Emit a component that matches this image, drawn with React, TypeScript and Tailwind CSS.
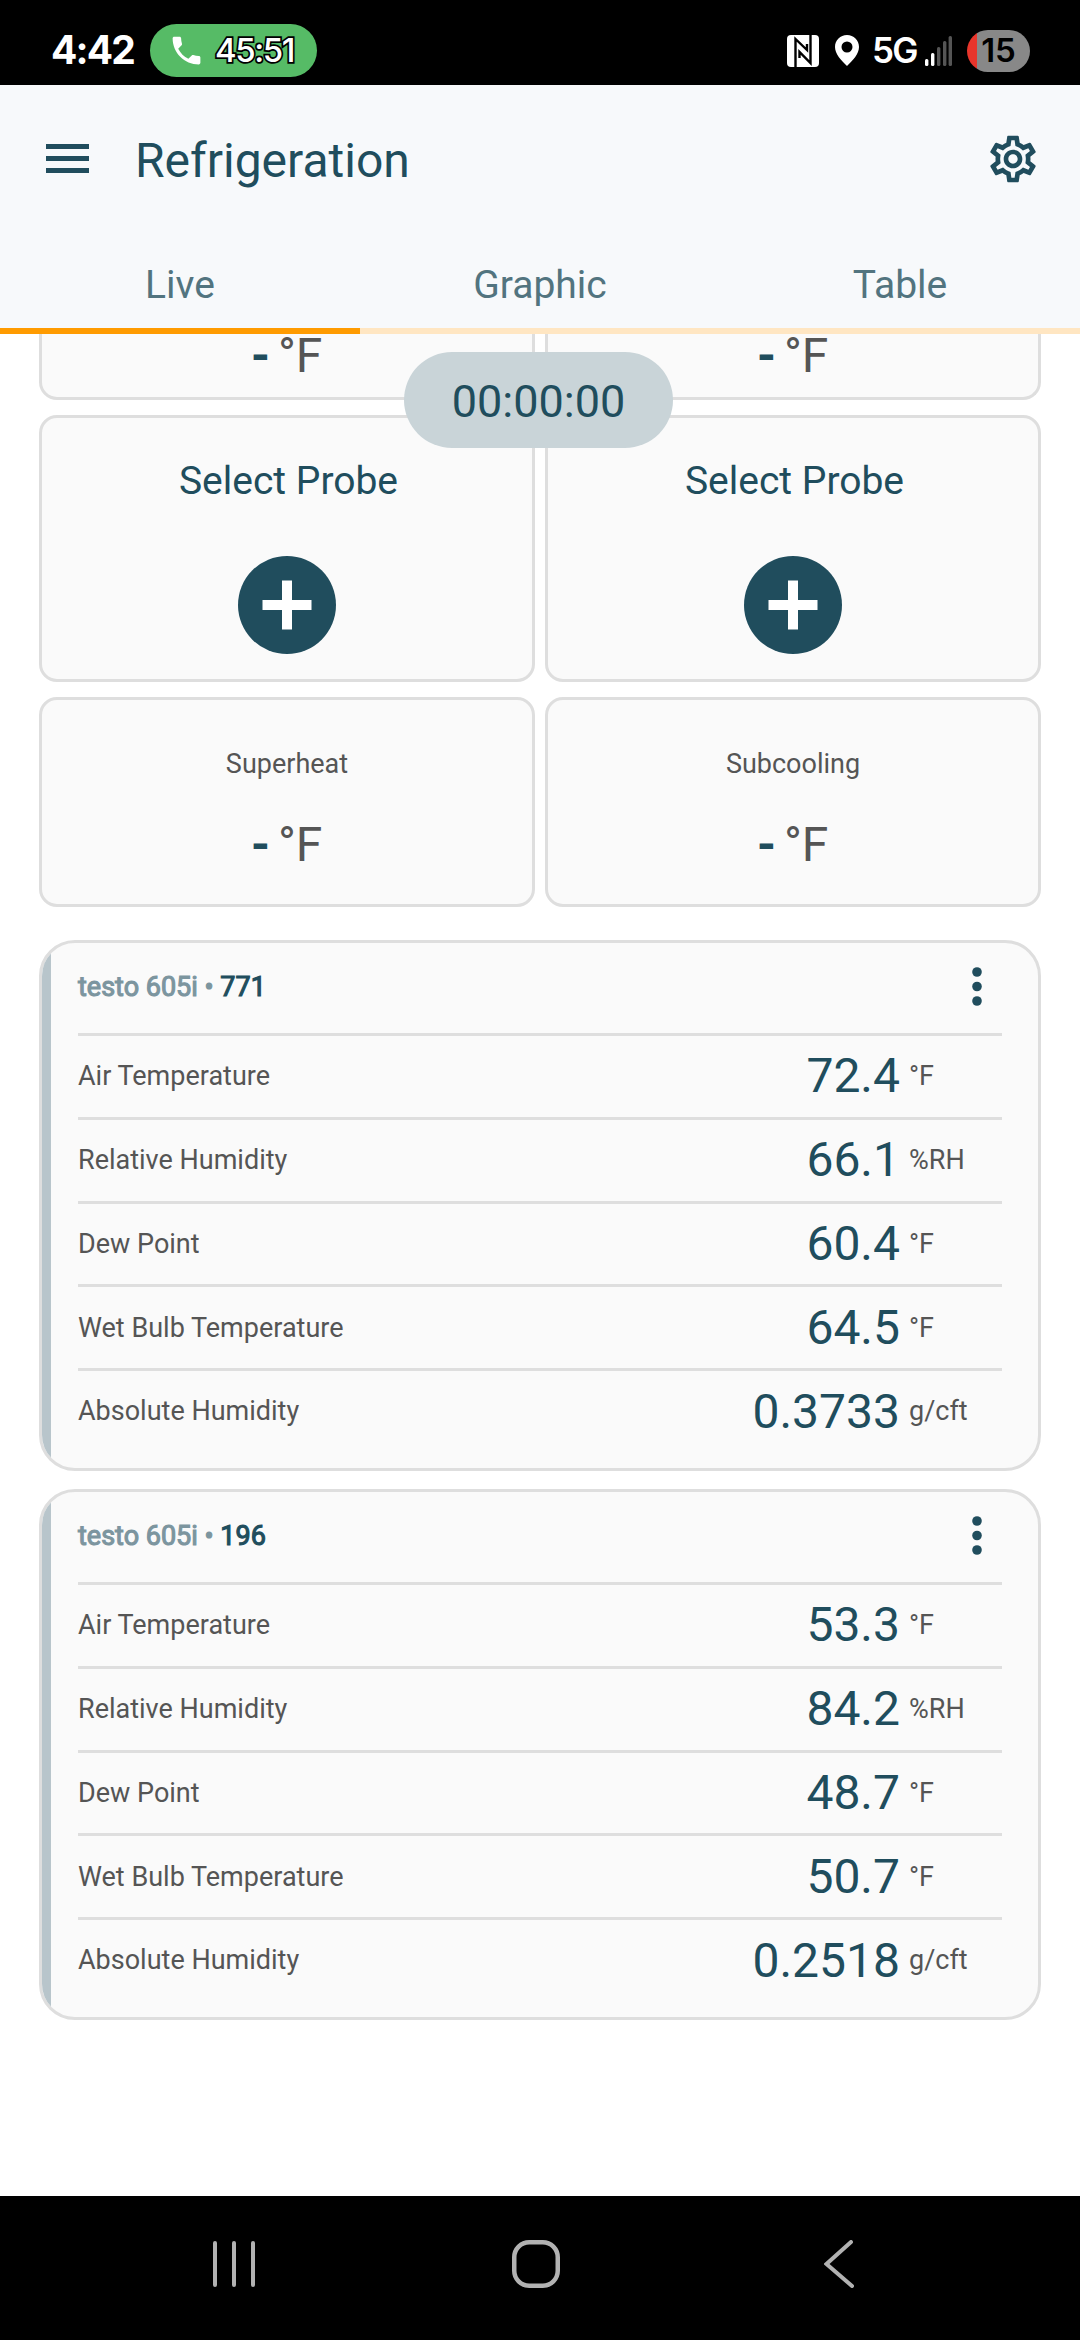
import { MdOutlineSettings, MdPhone } from "react-icons/md"

interface Reading {
  label: string
  value: string
  unit: string
}

interface Probe {
  model: string
  serial: string
  readings: Reading[]
}

const tabs = ["Live", "Graphic", "Table"]

const probes: Probe[] = [
  {
    model: "testo 605i",
    serial: "771",
    readings: [
      { label: "Air Temperature", value: "72.4", unit: "°F" },
      { label: "Relative Humidity", value: "66.1", unit: "%RH" },
      { label: "Dew Point", value: "60.4", unit: "°F" },
      { label: "Wet Bulb Temperature", value: "64.5", unit: "°F" },
      { label: "Absolute Humidity", value: "0.3733", unit: "g/cft" },
    ],
  },
  {
    model: "testo 605i",
    serial: "196",
    readings: [
      { label: "Air Temperature", value: "53.3", unit: "°F" },
      { label: "Relative Humidity", value: "84.2", unit: "%RH" },
      { label: "Dew Point", value: "48.7", unit: "°F" },
      { label: "Wet Bulb Temperature", value: "50.7", unit: "°F" },
      { label: "Absolute Humidity", value: "0.2518", unit: "g/cft" },
    ],
  },
]

export default function App() {
  return (
    <div className="flex h-[2340px] w-[1080px] flex-col overflow-hidden bg-white font-['Roboto','Liberation_Sans',sans-serif] text-[#204d5d]">
      <StatusBar />
      <Header />
      <main className="relative min-h-0 flex-1 overflow-hidden px-[39px]">
        {/* previous row is scrolled mostly out of view */}
        <div className="grid grid-cols-2 gap-x-[10px]">
          {[0, 1].map((i) => (
            <div key={i} className="flex h-[66px] items-start justify-center rounded-b-[18px] border-3 border-t-0 border-[#dedede] bg-[#fafafa] pt-[2px]">
              <EmptyValue />
            </div>
          ))}
        </div>
        <div className="mt-[15px] grid grid-cols-2 gap-x-[10px]">
          <SelectProbe />
          <SelectProbe />
        </div>
        <div className="mt-[15px] grid grid-cols-2 gap-x-[10px]">
          <ResultCard label="Superheat" />
          <ResultCard label="Subcooling" />
        </div>
        <div className="mt-[33px] flex flex-col gap-[18.5px]">
          {probes.map((probe) => (
            <ProbeCard key={probe.serial} probe={probe} />
          ))}
        </div>
        {/* floating timer */}
        <div className="absolute top-[18px] left-[404px] flex h-[96px] w-[269px] items-center justify-center rounded-full bg-[#c9d4d8] pt-[3px] text-[45px]">
          00:00:00
        </div>
      </main>
      <NavBar />
    </div>
  )
}

function StatusBar() {
  return (
    <div className="flex h-[85px] shrink-0 items-center bg-black pt-[16px] pr-[50px] pl-[51px] text-white">
      <span className="w-[99px] font-['Inter'] text-[39px] font-bold tracking-[-1.8px]">4:42</span>
      <div className="flex h-[53px] w-[167px] items-center rounded-full bg-[#56bb66] pl-[18px]">
        <MdPhone className="size-[37px]" />
        <span className="ml-[10px] font-['Inter'] text-[33px] font-medium tracking-[-1.4px] [-webkit-text-stroke:3.5px_black] [paint-order:stroke_fill]">45:51</span>
      </div>
      <div className="ml-auto flex items-center">
        <svg className="size-[32px]" viewBox="0 0 32 32">
          <rect width="32" height="32" rx="4" fill="white" />
          <path d="M8.5 32V4L20 15V9M23.5 0v28L12.5 17v6" stroke="black" strokeWidth="2.4" fill="none" />
        </svg>
        <svg className="ml-[16px] h-[31px] w-[24px]" viewBox="0 0 24 31">
          <path
            fill="white"
            fillRule="evenodd"
            d="M12 0C5.300 0 0 5.300 0 12c0 7 6 13 12 19 6-6 12-12 12-19C24 5.300 18.700 0 12 0zm0 6.500a5.500 5.500 0 1 1 0 11 5.500 5.500 0 0 1 0-11z"
          />
        </svg>
        <span className="ml-[13px] w-[53px] font-['Inter'] text-[35px] font-semibold tracking-[-1.8px]">5G</span>
        <svg className="h-[30px] w-[27px]" viewBox="0 0 27 30">
          <rect x="0" y="23" width="3.4" height="7" rx="1.5" fill="white" />
          <rect x="6" y="17" width="3.4" height="13" rx="1.5" fill="white" />
          <rect x="12" y="11" width="3.4" height="19" rx="1.5" fill="#555" />
          <rect x="18" y="5" width="3.4" height="25" rx="1.5" fill="#555" />
          <rect x="23.6" y="0" width="3.4" height="30" rx="1.5" fill="#555" />
        </svg>
        <div className="ml-[15px] flex h-[42px] w-[63px] items-center justify-center rounded-full bg-[linear-gradient(to_right,#e8352b_10px,#888_10px)] font-['Inter'] text-[33px] font-semibold text-black">
          15
        </div>
      </div>
    </div>
  )
}

function Header() {
  return (
    <header className="h-[249px] shrink-0 bg-[#f7f9fb]">
      <div className="flex h-[147px] items-center pr-[39px] pl-[46px]">
        <div className="flex w-[43px] flex-col gap-[7px]">
          <span className="h-[5px] bg-[#204d5d]" />
          <span className="h-[5px] bg-[#204d5d]" />
          <span className="h-[5px] bg-[#204d5d]" />
        </div>
        <h1 className="ml-[46px] pt-[4px] text-[48px]">Refrigeration</h1>
        <MdOutlineSettings className="ml-auto size-[56px]" />
      </div>
      <nav className="grid h-[102px] grid-cols-3">
        {tabs.map((tab, i) => (
          <div
            key={tab}
            className={`flex items-center justify-center border-b-6 pt-[10px] text-[39px] text-[#52747f] ${
              i === 0 ? "border-[#ff9b00]" : "border-[#ffe6c2]"
            }`}
          >
            {tab}
          </div>
        ))}
      </nav>
    </header>
  )
}

function EmptyValue() {
  return (
    <div className="flex items-center gap-[11px] pl-[2px] text-[48px] leading-[40px]">
      <span className="[-webkit-text-stroke:2px_#204d5d]">-</span>
      <span className="text-[#555]">°F</span>
    </div>
  )
}

function SelectProbe() {
  return (
    <div className="flex h-[267px] flex-col items-center rounded-[18px] border-3 border-[#dedede] bg-[#fafafa] pt-[40px]">
      <div className="pl-[3px] text-[39px] leading-[46px]">Select Probe</div>
      <svg className="mt-[52px] size-[98px]" viewBox="0 0 98 98">
        <circle cx="49" cy="49" r="49" fill="#204d5d" />
        <path d="M24.5 49h49M49 24.5v49" stroke="white" strokeWidth="10" />
      </svg>
    </div>
  )
}

function ResultCard({ label }: { label: string }) {
  return (
    <div className="flex h-[210px] flex-col items-center rounded-[18px] border-3 border-[#dedede] bg-[#fafafa] pt-[47px]">
      <div className="text-[27px] leading-[34px] text-[#555]">{label}</div>
      <div className="mt-[44px]">
        <EmptyValue />
      </div>
    </div>
  )
}

function ProbeCard({ probe }: { probe: Probe }) {
  return (
    <section className="flex h-[530.5px] overflow-hidden rounded-[36px] border-3 border-[#dedede] bg-[#fafafa]">
      <div className="w-[9px] bg-[#b8c5cb]" />
      <div className="flex-1 pr-[36px] pl-[27px]">
        <div className="flex h-[90px] items-center justify-between pr-[20px] pb-[3px]">
          <div className="pt-[2px] text-[27px] text-[#7c959f] [-webkit-text-stroke:1.1px_currentColor]">
            {probe.model} • <span className="text-[#204d5d]">{probe.serial}</span>
          </div>
          <svg className="h-[39px] w-[10px]" viewBox="0 0 10 39" fill="#204d5d">
            <circle cx="5" cy="5" r="4.8" />
            <circle cx="5" cy="19.5" r="4.8" />
            <circle cx="5" cy="34" r="4.8" />
          </svg>
        </div>
        {probe.readings.map((r) => (
          <div key={r.label} className="flex h-[83.8px] items-center border-t-3 border-[#dedede]">
            <span className="flex-1 text-[27px] text-[#555]">{r.label}</span>
            <span className="text-[48px]">{r.value}</span>
            <span className="ml-[9px] w-[93px] text-[27px] text-[#555]">{r.unit}</span>
          </div>
        ))}
      </div>
    </section>
  )
}

function NavBar() {
  return (
    <div className="flex h-[144px] shrink-0 items-center bg-black pb-[8px] pl-[212px]">
      <svg className="h-[48px] w-[44px]" viewBox="0 0 44 48" stroke="#b2b2b2" strokeWidth="4" strokeLinecap="round">
        <path d="M3 3v42M22 3v42M41 3v42" />
      </svg>
      <svg className="ml-[256px] size-[48px]" viewBox="0 0 48 48" fill="none" stroke="#b2b2b2" strokeWidth="4.5">
        <rect x="2.25" y="2.25" width="43.5" height="43.5" rx="15" />
      </svg>
      <svg className="ml-[264px] h-[48px] w-[30px]" viewBox="0 0 30 48" fill="none" stroke="#b2b2b2" strokeWidth="4" strokeLinecap="round">
        <path d="M27 2L2.500 24 28 46" />
      </svg>
    </div>
  )
}
